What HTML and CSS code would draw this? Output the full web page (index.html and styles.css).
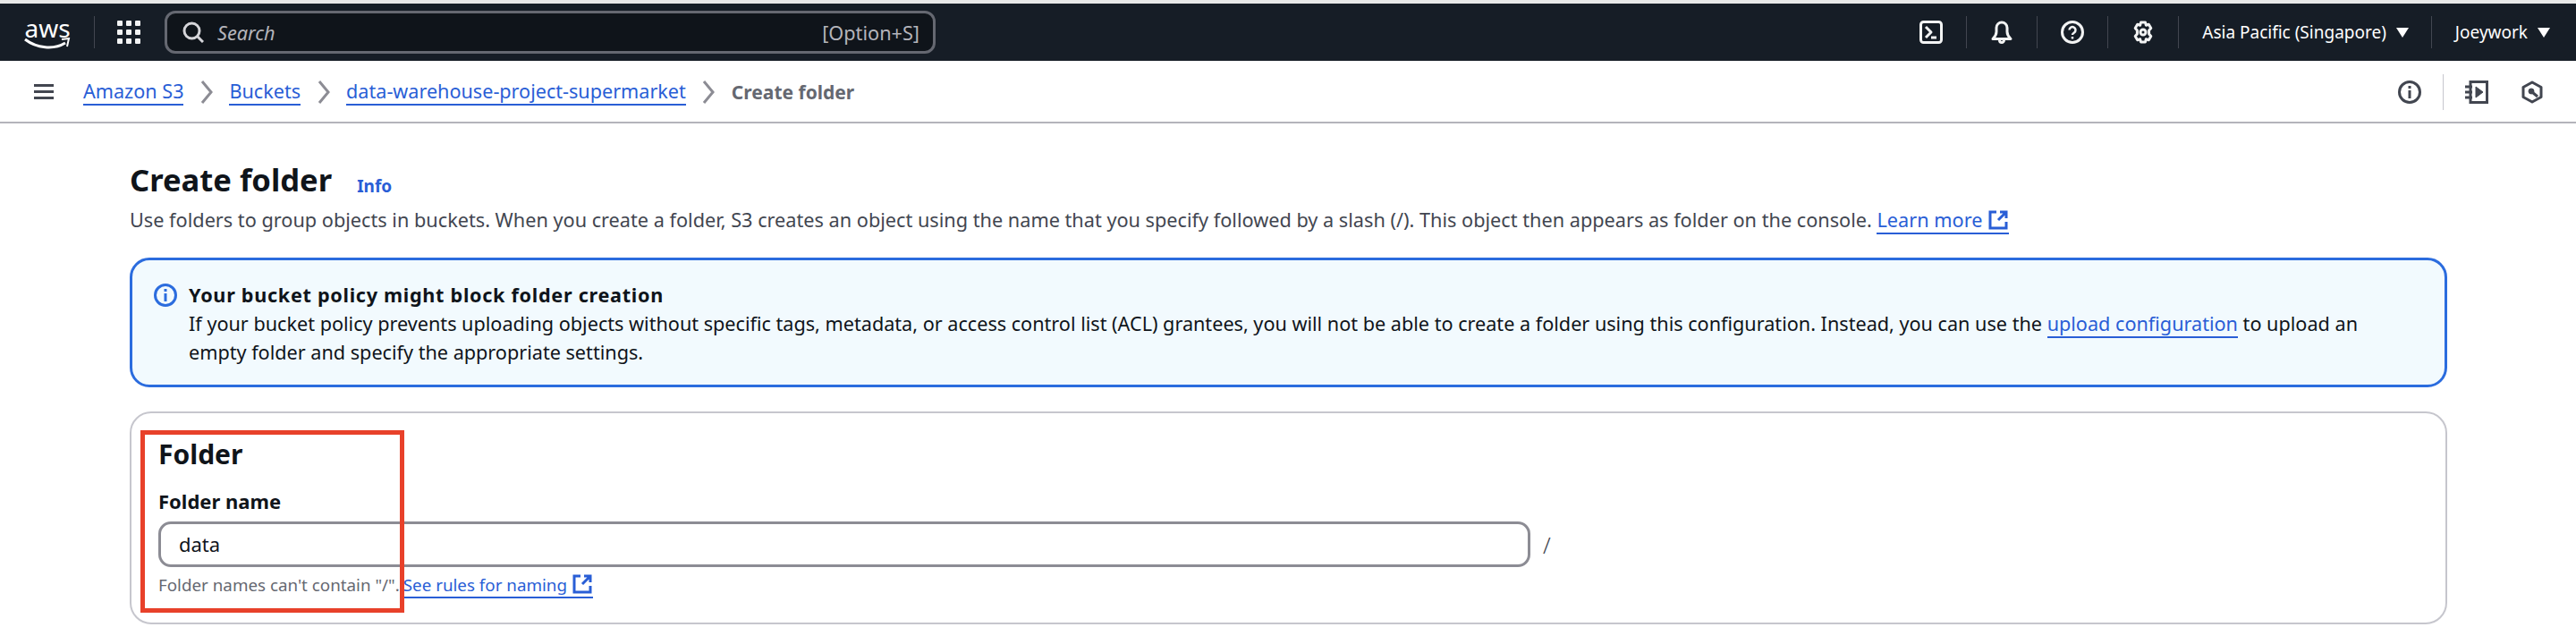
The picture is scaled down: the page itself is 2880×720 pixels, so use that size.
FILE: index.html
```html
<!DOCTYPE html>
<html lang="en">

<head>
    <meta charset="UTF-8">
    <meta name="viewport" content="width=device-width, initial-scale=1.0">
    <title>Create folder</title>
    <link rel="stylesheet" href="styles.css">
</head>

<body>
    <header class="topbar">
        <div class="aws-logo">
            <span class="aws-word">aws</span>
            <svg class="aws-smile" viewBox="0 0 52 13" width="52" height="13">
                <path d="M1 2c13 10 32 12 45 4" fill="none" stroke="#fff" stroke-width="3" />
                <path d="M42 2l8-1-2 9" fill="none" stroke="#fff" stroke-width="2" />
            </svg>
        </div>
        <span class="top-divider logo-divider"></span>
        <svg class="apps-icon" viewBox="0 0 26 26" width="26" height="26" fill="#f2f3f3">
            <rect x="0" y="0" width="6" height="6" rx="1" />
            <rect x="10" y="0" width="6" height="6" rx="1" />
            <rect x="20" y="0" width="6" height="6" rx="1" />
            <rect x="0" y="10" width="6" height="6" rx="1" />
            <rect x="10" y="10" width="6" height="6" rx="1" />
            <rect x="20" y="10" width="6" height="6" rx="1" />
            <rect x="0" y="20" width="6" height="6" rx="1" />
            <rect x="10" y="20" width="6" height="6" rx="1" />
            <rect x="20" y="20" width="6" height="6" rx="1" />
        </svg>
        <div class="search">
            <svg class="search-icon" viewBox="0 0 24 24" width="24" height="24" fill="none" stroke="#d5d5d9" stroke-width="3">
                <circle cx="10.5" cy="10.5" r="8.5" />
                <path d="M16 16l7 7" />
            </svg>
            <span class="search-text">Search</span>
            <span class="search-key">[Option+S]</span>
        </div>
        <div class="top-right">
            <svg class="top-icon" viewBox="0 0 26 26" width="26" height="26" fill="none" stroke="#f2f3f3" stroke-width="3" stroke-linejoin="round">
                <rect x="1.5" y="1.5" width="23" height="23" rx="3" />
                <path d="M7 7l6 6-6 6" />
                <path d="M13 19h6" />
            </svg>
            <span class="top-divider"></span>
            <svg class="top-icon" viewBox="0 0 26 26" width="26" height="26" fill="none" stroke="#f2f3f3" stroke-width="3" stroke-linejoin="round">
                <path d="M3 20.5c2-2 4-4 4-8V8a6 6 0 0 1 12 0v4.5c0 4 2 6 4 8z" />
                <path d="M10.5 22a2.5 2.5 0 0 0 5 0" />
            </svg>
            <span class="top-divider"></span>
            <svg class="top-icon" viewBox="0 0 26 26" width="26" height="26" fill="none" stroke="#f2f3f3" stroke-width="3">
                <circle cx="13" cy="13" r="11.5" />
                <path d="M9.5 10.5a3.5 3.5 0 1 1 5.5 3c-1.5 1-2 1.500-2 2.500" stroke-width="2.5" />
                <path d="M13 18v2.5" stroke-width="2.5" />
            </svg>
            <span class="top-divider"></span>
            <svg class="top-icon" viewBox="0 0 26 26" width="26" height="26" fill="none" stroke="#f2f3f3" stroke-width="3" stroke-linejoin="round">
                <path d="M10.5 2h5l.8 3.2 3-.9 2.500 4.300-2.200 2.400 0 4 2.200 2.400-2.500 4.300-3-.9-.8 3.200h-5l-.8-3.200-3 .9-2.500-4.300 2.200-2.400 0-4-2.200-2.400 2.500-4.300 3 .9z" />
                <circle cx="13" cy="13" r="3" />
            </svg>
            <span class="top-divider"></span>
            <span class="top-menu">Asia Pacific (Singapore)<span class="caret"></span></span>
            <span class="top-divider"></span>
            <span class="top-menu">Joeywork<span class="caret"></span></span>
        </div>
    </header>

    <nav class="crumbbar">
        <svg class="menu-icon" viewBox="0 0 22 18" width="22" height="18" fill="#424650">
            <rect width="22" height="3" />
            <rect y="7" width="22" height="3" />
            <rect y="14" width="22" height="3" />
        </svg>
        <a class="crumb">Amazon S3</a>
        <svg class="chev" viewBox="0 0 14 26" width="14" height="26"><path d="M2 1l10 12-10 12" /></svg>
        <a class="crumb">Buckets</a>
        <svg class="chev" viewBox="0 0 14 26" width="14" height="26"><path d="M2 1l10 12-10 12" /></svg>
        <a class="crumb">data-warehouse-project-supermarket</a>
        <svg class="chev" viewBox="0 0 14 26" width="14" height="26"><path d="M2 1l10 12-10 12" /></svg>
        <span class="crumb-current">Create folder</span>
        <div class="crumb-tools">
            <svg viewBox="0 0 26 26" width="26" height="26" fill="none" stroke="#424650" stroke-width="3">
                <circle cx="13" cy="13" r="11.5" />
                <path d="M13 11v9M13 6v3" />
            </svg>
            <span class="tools-divider"></span>
            <svg viewBox="0 0 26 26" width="26" height="26" fill="none" stroke="#424650" stroke-width="3">
                <path d="M6 1.5h18.5v23H6z" />
                <path d="M0 7h8M0 13h8M0 19h8" />
                <path d="M12 7l8 6-8 6z" fill="#424650" stroke-width="1" />
            </svg>
            <svg class="hex-icon" viewBox="0 0 24 26" width="24" height="26" fill="none" stroke="#424650" stroke-width="3" stroke-linejoin="round">
                <path d="M12 2l10 5.5v11l-10 5.5-10-5.500v-11z" />
                <circle cx="11" cy="12" r="3" fill="#424650" stroke-width="1" />
                <path d="M12 13l6 5" />
            </svg>
        </div>
    </nav>

    <main class="content">
        <div class="title-row">
            <h1>Create folder</h1>
            <a class="info-link">Info</a>
        </div>
        <p class="description">Use folders to group objects in buckets. When you create a folder, S3 creates an object using the name that you specify followed by a slash (/). This object then appears as folder on the console. <a class="link">Learn more <svg class="ext-icon" viewBox="0 0 24 24" width="24" height="24"><path d="M10 3H3v18h18v-7M14 3h7v7M21 3l-9 9" /></svg></a></p>

        <div class="alert">
            <svg class="alert-icon" viewBox="0 0 26 26" width="26" height="26" fill="none" stroke="#2b6cde" stroke-width="3">
                <circle cx="13" cy="13" r="11.5" />
                <path d="M13 11v9M13 6v3" />
            </svg>
            <div>
                <div class="alert-title">Your bucket policy might block folder creation</div>
                <div class="alert-text">If your bucket policy prevents uploading objects without specific tags, metadata, or access control list (ACL) grantees, you will not be able to create a folder using this configuration. Instead, you can use the <a class="link">upload configuration</a> to upload an empty folder and specify the appropriate settings.</div>
            </div>
        </div>

        <section class="card">
            <h2>Folder</h2>
            <label class="field-label">Folder name</label>
            <div class="field-row">
                <div class="field-input">data</div>
                <span class="slash">/</span>
            </div>
            <p class="hint">Folder names can't contain "/".<a class="link hint-link">See rules for naming <svg class="ext-icon" viewBox="0 0 24 24" width="24" height="24"><path d="M10 3H3v18h18v-7M14 3h7v7M21 3l-9 9" /></svg></a></p>
            <div class="highlight"></div>
        </section>
    </main>
</body>

</html>
```

FILE: styles.css
```css
body {
    margin: 0;
    height: 720px;
    overflow: hidden;
    background-color: #fff;
    font-family: "Noto Sans", sans-serif;
    color: #0f141a;
}

.topbar {
    display: flex;
    align-items: center;
    height: 64px;
    margin-top: 4px;
    padding-left: 27px;
    background-color: #161d26;
    box-shadow: 0 -4px 0 #e8e8e8;
}

.aws-logo {
    display: flex;
    flex-direction: column;
    align-items: center;
    width: 52px;
    color: #fff;
}

.aws-word {
    font-size: 28px;
    line-height: 28px;
    height: 26px;
}

.aws-smile {
    margin-top: -1px;
}

.top-divider {
    flex-shrink: 0;
    width: 1px;
    height: 36px;
    background-color: #424650;
}

.logo-divider {
    margin-left: 26px;
}

.apps-icon {
    flex-shrink: 0;
    margin-left: 25px;
}

.search {
    display: flex;
    flex-shrink: 0;
    align-items: center;
    box-sizing: border-box;
    width: 862px;
    height: 48px;
    margin-left: 27px;
    padding: 0 15px 0 17px;
    background-color: #0f141a;
    border: 3px solid #656871;
    border-radius: 12px;
    color: #b4b4bb;
    font-size: 21.7px;
}

.search-text {
    margin-left: 15px;
    font-style: italic;
}

.search-key {
    margin-left: auto;
}

.top-right {
    display: flex;
    align-items: center;
    margin-left: auto;
    padding-right: 4px;
    color: #fff;
}

.top-icon {
    flex-shrink: 0;
    margin: 0 26px;
}

.top-menu {
    display: flex;
    align-items: center;
    padding: 0 25px 0 26px;
    font-size: 19px;
    white-space: nowrap;
}

.caret {
    width: 0;
    height: 0;
    margin-left: 11px;
    border-left: 7px solid transparent;
    border-right: 7px solid transparent;
    border-top: 11px solid #fff;
}

.crumbbar {
    display: flex;
    align-items: center;
    box-sizing: border-box;
    height: 70px;
    padding: 2px 0 0 38px;
    border-bottom: 2px solid #b4b4bb;
    font-size: 21.6px;
}

.menu-icon {
    flex-shrink: 0;
    margin-right: 33px;
}

.crumb {
    color: #295ed6;
    border-bottom: 2px solid #295ed6;
    line-height: 28px;
}

.chev {
    flex-shrink: 0;
    margin: 0 18.5px;
    fill: none;
    stroke: #8c8c94;
    stroke-width: 3;
}

.crumb-current {
    color: #656871;
    font-size: 21px;
    font-weight: 700;
}

.crumb-tools {
    display: flex;
    align-items: center;
    margin-left: auto;
    padding-right: 37px;
}

.tools-divider {
    width: 1px;
    height: 40px;
    margin: 0 24px;
    background-color: #c6c6cd;
}

.hex-icon {
    margin-left: 37px;
}

.content {
    padding: 40px 144px 0 145px;
}

.title-row {
    display: flex;
    align-items: flex-end;
}

h1 {
    margin: 0;
    font-size: 34.6px;
    line-height: 46px;
    font-weight: 700;
}

.info-link {
    margin: 0 0 3px 28px;
    color: #295ed6;
    font-size: 19px;
    line-height: 26px;
    font-weight: 700;
}

.description {
    margin: 6px 0 0;
    color: #424650;
    font-size: 21.7px;
    line-height: 32px;
}

.link {
    color: #295ed6;
    border-bottom: 2px solid #295ed6;
}

.ext-icon {
    vertical-align: -4px;
    fill: none;
    stroke: #295ed6;
    stroke-width: 3;
}

.alert {
    display: flex;
    gap: 13px;
    box-sizing: border-box;
    height: 145px;
    margin-top: 26px;
    padding: 23px 50px 0 24px;
    background-color: #f2fafe;
    border: 3px solid #2b6cde;
    border-radius: 22px;
    font-size: 21.64px;
    line-height: 32px;
}

.alert-icon {
    flex-shrink: 0;
    margin-top: 3px;
}

.alert-title {
    font-weight: 700;
    letter-spacing: 0.7px;
}

.card {
    position: relative;
    box-sizing: border-box;
    height: 238px;
    margin-top: 27px;
    padding: 26px 30px 0 30px;
    border: 2px solid #c6c6cd;
    border-radius: 24px;
}

h2 {
    margin: 0;
    font-size: 30px;
    line-height: 40px;
    font-weight: 700;
}

.field-label {
    display: block;
    margin-top: 17px;
    font-size: 22px;
    line-height: 30px;
    font-weight: 700;
}

.field-row {
    display: flex;
    align-items: center;
    margin-top: 8px;
}

.field-input {
    box-sizing: border-box;
    width: 1534px;
    height: 51px;
    padding-left: 20px;
    border: 3px solid #8c8c94;
    border-radius: 14px;
    font-size: 22px;
    line-height: 45px;
}

.slash {
    margin-left: 14px;
    color: #424650;
    font-size: 25px;
    font-weight: 300;
}

.hint {
    margin: 5px 0 0;
    color: #656871;
    font-size: 18.8px;
    line-height: 30px;
}

.hint-link {
    margin-left: 4px;
}

.highlight {
    position: absolute;
    left: 10px;
    top: 19px;
    width: 285px;
    height: 194px;
    border: 5px solid #e8412a;
}
```
